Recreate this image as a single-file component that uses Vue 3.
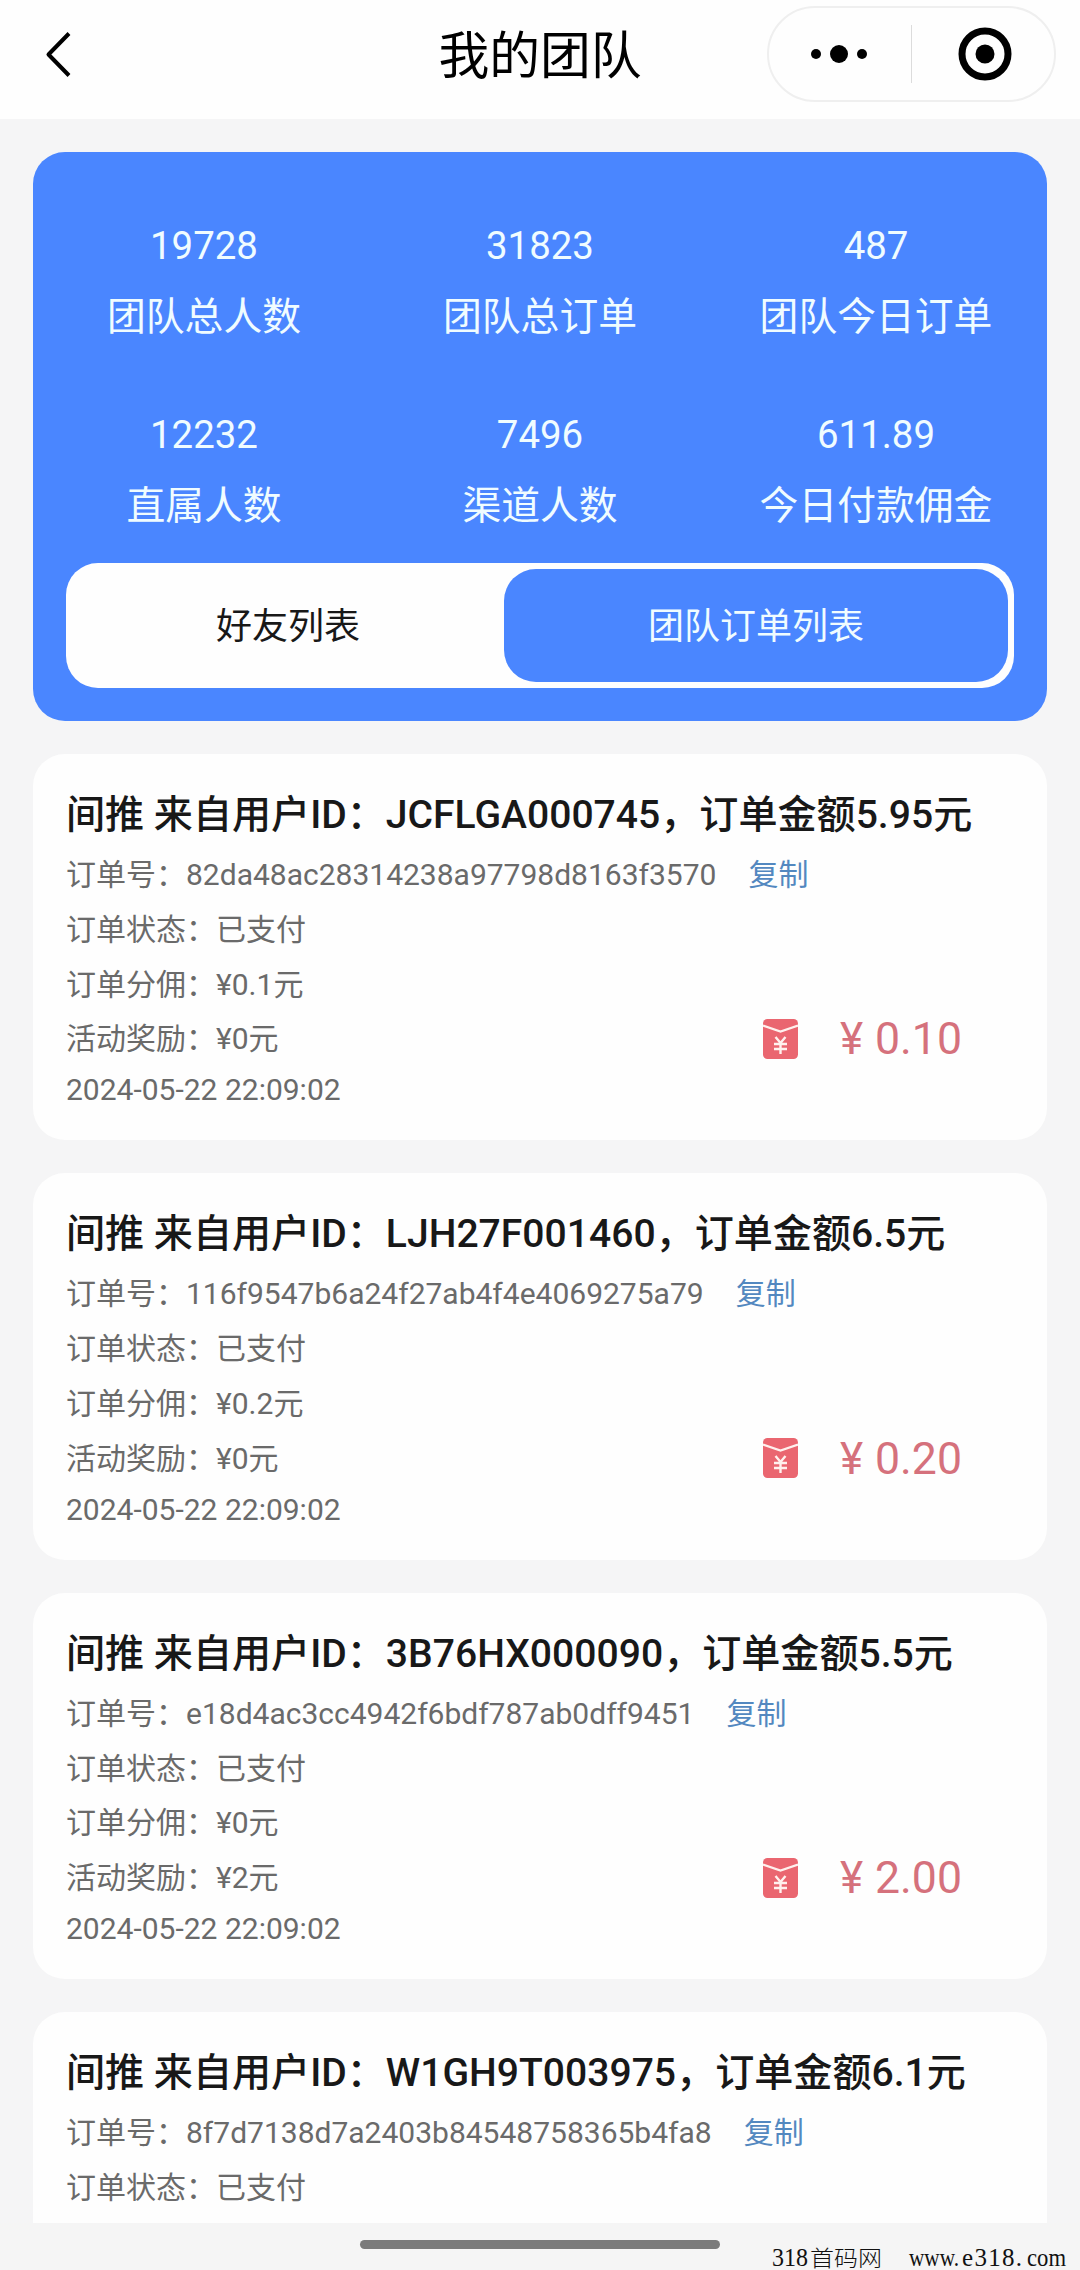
<template>
  <div class="team-page" lang="zh-CN">
    <header class="nav">
      <svg class="back" viewBox="0 0 30 50">
        <path d="M26 4.5 L5.5 25.5 L26 46.5" fill="none" stroke="#000" stroke-width="4" stroke-linejoin="round" />
      </svg>
      <h1 class="nav-title">我的团队</h1>
      <div class="capsule">
        <svg class="dots" viewBox="0 0 60 20">
          <circle cx="7" cy="10" r="5" />
          <circle cx="30" cy="10" r="9" />
          <circle cx="53" cy="10" r="5" />
        </svg>
        <span class="capsule-line"></span>
        <svg class="target" viewBox="0 0 54 54">
          <circle cx="27" cy="27" r="23" fill="none" stroke="#000" stroke-width="7" />
          <circle cx="27" cy="27" r="9.5" />
        </svg>
      </div>
    </header>

    <main class="content">
      <section class="summary">
        <div class="stats">
          <div v-for="item in stats" :key="item.label" class="stat">
            <div class="stat-value">{{ item.value }}</div>
            <div class="stat-label">{{ item.label }}</div>
          </div>
        </div>
        <div class="tabs">
          <div
            v-for="tab in tabs"
            :key="tab.key"
            :class="['tab', tab.key, { active: activeTab === tab.key }]"
            @click="activeTab = tab.key"
          >
            {{ tab.name }}
          </div>
        </div>
      </section>

      <section v-for="order in orders" :key="order.no" class="order">
        <h2 class="order-title">间推 来自用户ID：{{ order.user }}，订单金额{{ order.total }}元</h2>
        <div class="row">
          <span>订单号：{{ order.no }}</span>
          <span class="copy">复制</span>
        </div>
        <div class="row">订单状态：已支付</div>
        <template v-if="order.income">
          <div class="row">订单分佣：¥{{ order.commission }}元</div>
          <div class="row">
            <span>活动奖励：¥{{ order.reward }}元</span>
            <div class="income">
              <svg class="packet" viewBox="0 0 35 40">
                <rect width="35" height="40" rx="4.5" fill="#ea6670" />
                <path d="M0 6.5 L17.5 12.5 L35 6.5" fill="none" stroke="#fff1ee" stroke-width="2.2" />
                <path
                  d="M12.5 18 L17.5 24 L22.5 18 M17.5 24 V35 M11 25 H24 M11 30 H24"
                  fill="none"
                  stroke="#fff1ee"
                  stroke-width="2.4"
                />
              </svg>
              <span class="yen">¥</span>
              <span class="money">{{ order.income }}</span>
            </div>
          </div>
          <div class="time">2024-05-22 22:09:02</div>
        </template>
      </section>
    </main>

    <footer class="bottom">
      <span class="home-bar"></span>
      <svg class="site" viewBox="0 0 300 30">
        <text x="0" y="23" textLength="36" lengthAdjust="spacingAndGlyphs">318</text>
        <text x="38" y="23" class="cn" textLength="72" lengthAdjust="spacingAndGlyphs">首码网</text>
        <text x="137" y="23" textLength="50" lengthAdjust="spacingAndGlyphs">www.</text>
        <text x="190" y="23" textLength="60" lengthAdjust="spacing">e318.</text>
        <text x="255" y="23" textLength="39" lengthAdjust="spacingAndGlyphs">com</text>
      </svg>
    </footer>
  </div>
</template>

<script setup>
import { ref } from 'vue'

const activeTab = ref('team')

const tabs = [
  { key: 'friends', name: '好友列表' },
  { key: 'team', name: '团队订单列表' }
]

const stats = [
  { value: '19728', label: '团队总人数' },
  { value: '31823', label: '团队总订单' },
  { value: '487', label: '团队今日订单' },
  { value: '12232', label: '直属人数' },
  { value: '7496', label: '渠道人数' },
  { value: '611.89', label: '今日付款佣金' }
]

const orders = [
  { user: 'JCFLGA000745', total: '5.95', no: '82da48ac28314238a97798d8163f3570', commission: '0.1', reward: '0', income: '0.10' },
  { user: 'LJH27F001460', total: '6.5', no: '116f9547b6a24f27ab4f4e4069275a79', commission: '0.2', reward: '0', income: '0.20' },
  { user: '3B76HX000090', total: '5.5', no: 'e18d4ac3cc4942f6bdf787ab0dff9451', commission: '0', reward: '2', income: '2.00' },
  { user: 'W1GH9T003975', total: '6.1', no: '8f7d7138d7a2403b84548758365b4fa8' }
]
</script>

<style>
body {
  margin: 0;
  background: #f5f5f5;
}
</style>

<style scoped>
.team-page {
  display: flex;
  flex-direction: column;
  width: 1080px;
  height: 2270px;
  overflow: hidden;
  background: #f5f5f6;
  color: #181818;
  font-family: Roboto, "Noto Sans CJK SC", sans-serif;
}

.nav {
  display: grid;
  grid-template-columns: 313px 1fr 313px;
  align-items: center;
  flex: none;
  height: 119px;
  box-sizing: border-box;
  padding-bottom: 11px;
  background: #fefefe;
}

.back {
  width: 30px;
  height: 50px;
  margin-left: 43px;
}

.nav-title {
  margin: 0;
  padding-top: 6px;
  text-align: center;
  font-size: 50.8px;
  font-weight: 400;
  line-height: 70px;
  color: #000;
}

.capsule {
  display: flex;
  align-items: center;
  box-sizing: border-box;
  width: 289px;
  height: 96px;
  border: 2px solid #efefef;
  border-radius: 48px;
}

.dots {
  width: 60px;
  height: 20px;
  margin-left: 40px;
}

.capsule-line {
  width: 1px;
  height: 58px;
  margin-left: 42px;
  background: #dcdcdc;
}

.target {
  width: 54px;
  height: 54px;
  margin-left: 46px;
}

.content {
  display: flex;
  flex-direction: column;
  gap: 33px;
  flex: 1;
  min-height: 0;
  overflow: hidden;
  padding: 33px 33px 0;
}

.summary {
  flex: none;
  box-sizing: border-box;
  height: 569px;
  padding: 59px 33px 0;
  border-radius: 32px;
  background: #4a86ff;
}

.stats {
  display: grid;
  grid-template-columns: repeat(3, 336px);
  row-gap: 48px;
  margin: 0 -30px;
  color: #f0fcff;
  text-align: center;
}

.stat-value {
  font-size: 38.4px;
  line-height: 70px;
}

.stat-label {
  padding-top: 1px;
  font-size: 38.8px;
  line-height: 70px;
}

.tabs {
  display: flex;
  box-sizing: border-box;
  height: 125px;
  margin-top: 22px;
  padding: 6px;
  border-radius: 32px;
  background: #fefefe;
}

.tab {
  box-sizing: border-box;
  width: 432px;
  padding-top: 3px;
  border-radius: 32px;
  text-align: center;
  font-size: 36px;
  line-height: 110px;
}

.tab.team {
  width: 504px;
}

.tab.active {
  background: #4a86ff;
  color: #f0fcff;
}

.order {
  flex: none;
  box-sizing: border-box;
  height: 386.4px;
  padding: 31px 33px 0;
  border-radius: 32px;
  background: #fefefe;
}

.order-title {
  margin: 0 0 3px;
  font-size: 39.1px;
  font-weight: 500;
  line-height: 60px;
  white-space: nowrap;
}

.row {
  display: flex;
  align-items: center;
  height: 54.8px;
  font-size: 30px;
  line-height: 54.8px;
  color: #6a6a6a;
}

.copy {
  margin-left: 32px;
  color: #5388c0;
}

.income {
  display: flex;
  align-items: center;
  width: 251px;
  margin-left: auto;
  color: #d5717c;
}

.packet {
  width: 35px;
  height: 40px;
  margin-bottom: 2px;
}

.yen {
  width: 35px;
  margin-left: 42px;
  font-size: 44px;
}

.money {
  font-size: 44.6px;
}

.time {
  font-size: 30px;
  line-height: 45px;
  color: #6a6a6a;
}

.bottom {
  position: relative;
  display: flex;
  justify-content: center;
  flex: none;
  height: 47px;
  background: #f5f5f5;
}

.home-bar {
  width: 360px;
  height: 9px;
  margin-top: 17px;
  border-radius: 5px;
  background: #7b7b7b;
}

/* site mark lies over the bottom bar */
.site {
  position: absolute;
  right: 8px;
  bottom: -3px;
  width: 300px;
  height: 30px;
  font-family: "Liberation Serif", serif;
  font-size: 25px;
  fill: #111;
}

.site .cn {
  font-family: "Noto Sans CJK SC", sans-serif;
  font-size: 22px;
  font-weight: 300;
}
</style>
